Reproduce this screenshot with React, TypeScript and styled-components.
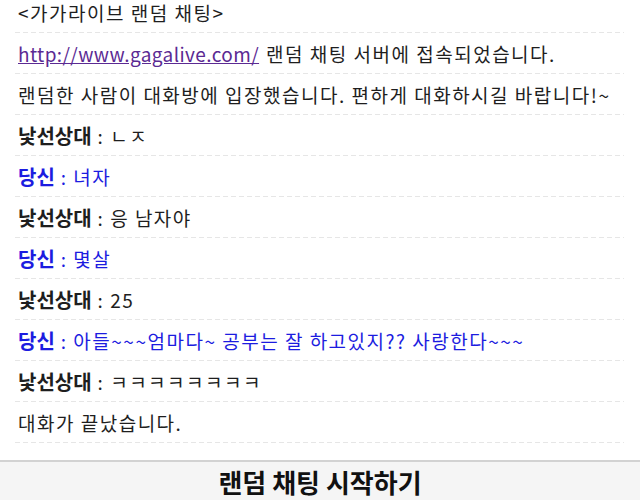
import React from "react";
import styled, { createGlobalStyle } from "styled-components";

const Global = createGlobalStyle`
  html, body { margin: 0; padding: 0; background: #fff; }
  body { font-family: "Noto Sans CJK KR", "Noto Sans", sans-serif; }
`;

const Page = styled.div`
  width: 640px;
  height: 500px;
  overflow: hidden;
  display: flex;
  flex-direction: column;
  background: #fff;
`;

const Log = styled.div`
  flex: 1;
  overflow: hidden;
  display: flex;
  flex-direction: column;
  justify-content: flex-end;
  padding: 0 16px 17px 15px;
`;

const Row = styled.div`
  flex: none;
  height: 41px;
  display: flex;
  align-items: center;
  padding-left: 3px;
  font-size: 19px;
  letter-spacing: 1.5px;
  color: #1e1e1e;
  white-space: nowrap;
  background-image: linear-gradient(to right, #e6e6e6 5px, transparent 5px);
  background-size: 8px 1px;
  background-repeat: repeat-x;
  background-position: left bottom;
`;

const Link = styled.a`
  color: #5b2a93;
  text-decoration: underline;
  letter-spacing: 0.4px;
  margin-right: 7px;
`;

const Speaker = styled.span<{ $me?: boolean }>`
  font-weight: 700;
  font-size: 20px;
  letter-spacing: 0;
  color: ${(p) => (p.$me ? "#1c1ce0" : "#1e1e1e")};
`;

const Msg = styled.span<{ $me?: boolean }>`
  color: ${(p) => (p.$me ? "#1c1ce0" : "#1e1e1e")};
  margin-left: 6px;
`;

const Bar = styled.div`
  flex: none;
  height: 38px;
  border-top: 2px solid #d2d2d2;
  background: #f5f5f5;
  display: flex;
  align-items: center;
  justify-content: center;
  font-size: 26px;
  font-weight: 700;
  color: #111;
`;

type Line = { who: "them" | "me"; text: string };
const chat: Line[] = [
  { who: "them", text: "ㄴㅈ" },
  { who: "me", text: "녀자" },
  { who: "them", text: "응 남자야" },
  { who: "me", text: "몇살" },
  { who: "them", text: "25" },
  { who: "me", text: "아들~~~엄마다~ 공부는 잘 하고있지?? 사랑한다~~~" },
  { who: "them", text: "ㅋㅋㅋㅋㅋㅋㅋㅋ" },
];

export default function App() {
  return (
    <Page>
      <Global />
      <Log>
        <Row>&lt;가가라이브 랜덤 채팅&gt;</Row>
        <Row>
          <Link href="#">http://www.gagalive.com/</Link>랜덤 채팅 서버에 접속되었습니다.
        </Row>
        <Row>랜덤한 사람이 대화방에 입장했습니다. 편하게 대화하시길 바랍니다!~</Row>
        {chat.map((l, i) => (
          <Row key={i}>
            <Speaker $me={l.who === "me"}>{l.who === "me" ? "당신" : "낯선상대"}</Speaker>
            <Msg $me={l.who === "me"}>: {l.text}</Msg>
          </Row>
        ))}
        <Row>대화가 끝났습니다.</Row>
      </Log>
      <Bar>랜덤 채팅 시작하기</Bar>
    </Page>
  );
}
